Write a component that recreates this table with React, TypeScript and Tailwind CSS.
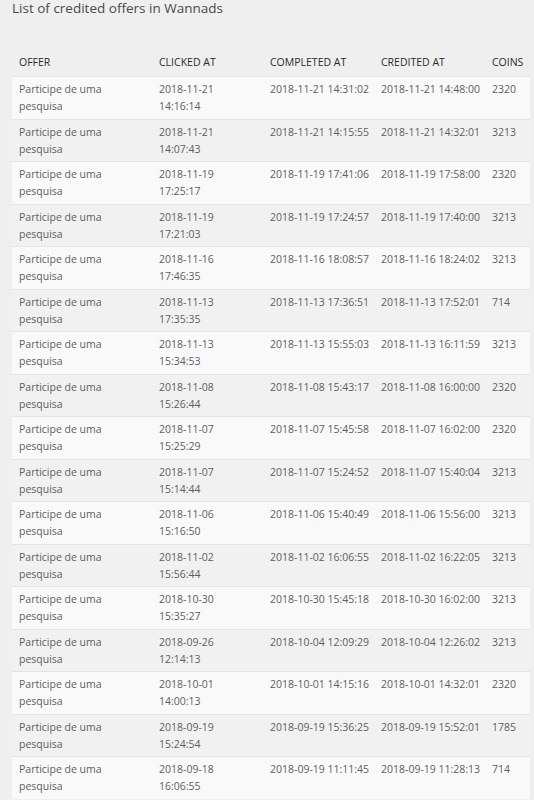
import React from "react";

type Row = {
  clicked: [string, string];
  completed: string;
  credited: string;
  coins: string;
};

const rows: Row[] = [
  { clicked: ["2018-11-21", "14:16:14"], completed: "2018-11-21 14:31:02", credited: "2018-11-21 14:48:00", coins: "2320" },
  { clicked: ["2018-11-21", "14:07:43"], completed: "2018-11-21 14:15:55", credited: "2018-11-21 14:32:01", coins: "3213" },
  { clicked: ["2018-11-19", "17:25:17"], completed: "2018-11-19 17:41:06", credited: "2018-11-19 17:58:00", coins: "2320" },
  { clicked: ["2018-11-19", "17:21:03"], completed: "2018-11-19 17:24:57", credited: "2018-11-19 17:40:00", coins: "3213" },
  { clicked: ["2018-11-16", "17:46:35"], completed: "2018-11-16 18:08:57", credited: "2018-11-16 18:24:02", coins: "3213" },
  { clicked: ["2018-11-13", "17:35:35"], completed: "2018-11-13 17:36:51", credited: "2018-11-13 17:52:01", coins: "714" },
  { clicked: ["2018-11-13", "15:34:53"], completed: "2018-11-13 15:55:03", credited: "2018-11-13 16:11:59", coins: "3213" },
  { clicked: ["2018-11-08", "15:26:44"], completed: "2018-11-08 15:43:17", credited: "2018-11-08 16:00:00", coins: "2320" },
  { clicked: ["2018-11-07", "15:25:29"], completed: "2018-11-07 15:45:58", credited: "2018-11-07 16:02:00", coins: "2320" },
  { clicked: ["2018-11-07", "15:14:44"], completed: "2018-11-07 15:24:52", credited: "2018-11-07 15:40:04", coins: "3213" },
  { clicked: ["2018-11-06", "15:16:50"], completed: "2018-11-06 15:40:49", credited: "2018-11-06 15:56:00", coins: "3213" },
  { clicked: ["2018-11-02", "15:56:44"], completed: "2018-11-02 16:06:55", credited: "2018-11-02 16:22:05", coins: "3213" },
  { clicked: ["2018-10-30", "15:35:27"], completed: "2018-10-30 15:45:18", credited: "2018-10-30 16:02:00", coins: "3213" },
  { clicked: ["2018-09-26", "12:14:13"], completed: "2018-10-04 12:09:29", credited: "2018-10-04 12:26:02", coins: "3213" },
  { clicked: ["2018-10-01", "14:00:13"], completed: "2018-10-01 14:15:16", credited: "2018-10-01 14:32:01", coins: "2320" },
  { clicked: ["2018-09-19", "15:24:54"], completed: "2018-09-19 15:36:25", credited: "2018-09-19 15:52:01", coins: "1785" },
  { clicked: ["2018-09-18", "16:06:55"], completed: "2018-09-19 11:11:45", credited: "2018-09-19 11:28:13", coins: "714" },
];

const cols = "grid grid-cols-[140px_111px_111px_111px_1fr]";

export default function App() {
  return (
    <div className="min-h-[800px] w-[534px] overflow-hidden bg-[#efefef] pl-3 pr-1 font-['Open_Sans',sans-serif] text-[#5e5e5e]">
      <h1 className="text-[13.5px] leading-[17px] text-[#4a4a4a]">
        List of credited offers in Wannads
      </h1>

      <div className="mt-[17px]">
        <div className={`${cols} h-[42px] items-end pb-[5.5px] text-[10.5px] leading-[17px] uppercase text-[#2a2a2a]`}>
          <div className="pl-[7px]">Offer</div>
          <div className="pl-[7px]">Clicked at</div>
          <div className="pl-[7px]">Completed at</div>
          <div className="pl-[7px]">Credited at</div>
          <div className="pl-[7px]">Coins</div>
        </div>

        {rows.map((r, i) => (
          <div
            key={i}
            className={`${cols} border-t border-[#e4e4e4] pt-[4px] pb-[3.5px] text-[10.5px] leading-[17px] ${
              i % 2 === 0 ? "bg-[#f9f9f9]" : "bg-[#f1f1f1]"
            }`}
          >
            <div className="pl-[7px]">
              Participe de uma
              <br />
              pesquisa
            </div>
            <div className="pl-[7px]">
              {r.clicked[0]}
              <br />
              {r.clicked[1]}
            </div>
            <div className="pl-[7px] whitespace-nowrap">{r.completed}</div>
            <div className="pl-[7px] whitespace-nowrap">{r.credited}</div>
            <div className="pl-[7px]">{r.coins}</div>
          </div>
        ))}
      </div>
    </div>
  );
}
